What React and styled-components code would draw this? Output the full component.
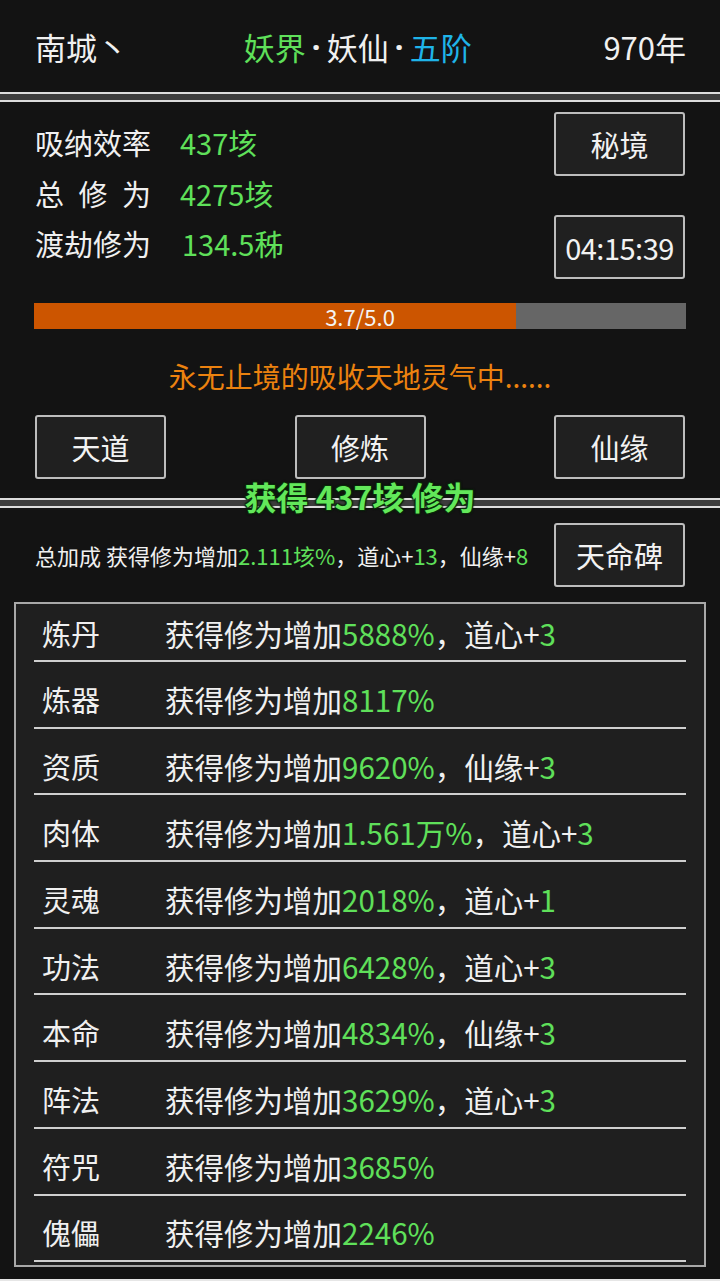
import React from "react";
import styled, { createGlobalStyle } from "styled-components";

const Global = createGlobalStyle`
  html, body { margin: 0; padding: 0; background: #e6e6e6; }
  body { font-family: "Noto Sans CJK SC", "Noto Sans", sans-serif; color: #f0f0f0; }
  * { box-sizing: border-box; }
`;

const Page = styled.div`
  width: 720px;
  background: #131313;
`;

const Header = styled.header`
  height: 92px;
  display: flex;
  align-items: center;
  justify-content: space-between;
  padding: 0 34px 0 35px;
  font-size: 31px;
`;

const Title = styled.div`
  display: flex;
  align-items: center;
  margin-right: 16px;
`;

const Tone = styled.span`
  color: ${(p) => p.$c || "#f0f0f0"};
`;

const Dot = styled.span`
  display: inline-flex;
  justify-content: center;
  width: 21px;
  font-family: "Noto Sans", sans-serif;
  font-weight: 700;
`;

const Separator = styled.div`
  position: relative;
  height: 10px;
  border-top: 2px solid #dcdcdc;
  border-bottom: 2px solid #dcdcdc;
  background: #3c3c3c;
`;

const FloatText = styled.div`
  position: absolute;
  left: 50%;
  top: -24px;
  transform: translateX(-50%);
  white-space: pre;
  font-size: 32px;
  font-weight: 700;
  line-height: 40px;
  color: #62e85a;
  text-shadow: -1px -1px 1px #0b2a0b, 1px -1px 1px #0b2a0b, -1px 1px 1px #0b2a0b,
    1px 1px 1px #0b2a0b, 0 0 3px #000;
  z-index: 2;
`;

const Panel = styled.section`
  padding: ${(p) => p.$pad};
`;

const TopSection = styled.div`
  display: flex;
  justify-content: space-between;
  align-items: flex-start;
`;

const Stats = styled.div`
  padding-top: 5px;
  padding-left: 1px;
  display: flex;
  flex-direction: column;
`;

const StatRow = styled.div`
  height: 50.5px;
  display: flex;
  align-items: center;
  font-size: 29px;
`;

const StatLabel = styled.span`
  width: 116px;
  text-align: justify;
  text-align-last: justify;
  margin-right: ${(p) => (p.$wide ? 31 : 29)}px;
`;

const StatValue = styled.span`
  color: #5fe05a;
`;

const SideButtons = styled.div`
  display: flex;
  flex-direction: column;
  gap: 39px;
  margin-right: 1px;
`;

const Button = styled.div`
  width: 131px;
  height: 64px;
  display: flex;
  align-items: center;
  justify-content: center;
  background: #202020;
  border: 2px solid #bdbdbd;
  border-radius: 3px;
  font-size: ${(p) => p.$size || 29}px;
  color: #f2f2f2;
  letter-spacing: ${(p) => (p.$tight ? "-0.5px" : "0")};
`;

const Progress = styled.div`
  position: relative;
  margin-top: 24px;
  height: 26px;
  background: #666;
  display: flex;
`;

const Fill = styled.div`
  height: 100%;
  background: #cc5500;
`;

const ProgressLabel = styled.div`
  position: absolute;
  inset: 0;
  display: flex;
  align-items: center;
  justify-content: center;
  font-size: 22px;
  color: #f4f4f4;
`;

const Status = styled.div`
  margin-top: 27px;
  height: 40px;
  line-height: 40px;
  text-align: center;
  font-size: 28px;
  color: #ec820f;
`;

const ButtonRow = styled.div`
  margin-top: 19px;
  display: flex;
  justify-content: space-between;
  padding-left: 1px;
  margin-right: 1px;
`;

const SummaryRow = styled.div`
  display: flex;
  align-items: center;
  justify-content: space-between;
  padding: 0 21px 0 21px;
`;

const Summary = styled.div`
  font-size: 22px;
  white-space: nowrap;
`;

const Green = styled.span`
  color: #5fe05a;
`;

const List = styled.div`
  margin-top: 15px;
  border: 2px solid #a8a8a8;
  background: #1f1f1f;
  padding: 0 18px 3px;
`;

const Row = styled.div`
  height: 66.7px;
  padding-top: 9px;
  display: flex;
  align-items: center;
  border-bottom: 2px solid #cfcfcf;
  font-size: 29px;
  &:first-child {
    height: 58px;
    padding-top: 1px;
  }
`;

const RowName = styled.span`
  width: 131px;
  padding-left: 8px;
  flex-shrink: 0;
`;

const RowDesc = styled.span`
  white-space: nowrap;
  font-size: 29.5px;
`;

const rows = [
  ["炼丹", "5888%", "道心", "3"],
  ["炼器", "8117%"],
  ["资质", "9620%", "仙缘", "3"],
  ["肉体", "1.561万%", "道心", "3"],
  ["灵魂", "2018%", "道心", "1"],
  ["功法", "6428%", "道心", "3"],
  ["本命", "4834%", "仙缘", "3"],
  ["阵法", "3629%", "道心", "3"],
  ["符咒", "3685%"],
  ["傀儡", "2246%"],
];

export default function App() {
  const progress = 3.7 / 5.0;
  return (
    <Page>
      <Global />
      <Header>
        <span>南城丶</span>
        <Title>
          <Tone $c="#5fe05a">妖界</Tone>
          <Dot>·</Dot>
          <Tone>妖仙</Tone>
          <Dot>·</Dot>
          <Tone $c="#1fb4e8">五阶</Tone>
        </Title>
        <span>970年</span>
      </Header>
      <Separator />
      <Panel $pad="10px 34px 19px 34px">
        <TopSection>
          <Stats>
            <StatRow>
              <StatLabel>吸纳效率</StatLabel>
              <StatValue>437垓</StatValue>
            </StatRow>
            <StatRow>
              <StatLabel>总修为</StatLabel>
              <StatValue>4275垓</StatValue>
            </StatRow>
            <StatRow>
              <StatLabel $wide>渡劫修为</StatLabel>
              <StatValue>134.5秭</StatValue>
            </StatRow>
          </Stats>
          <SideButtons>
            <Button>秘境</Button>
            <Button $size={29} $tight>04:15:39</Button>
          </SideButtons>
        </TopSection>
        <Progress>
          <Fill style={{ width: `${progress * 100}%` }} />
          <ProgressLabel>3.7/5.0</ProgressLabel>
        </Progress>
        <Status>永无止境的吸收天地灵气中......</Status>
        <ButtonRow>
          <Button>天道</Button>
          <Button>修炼</Button>
          <Button>仙缘</Button>
        </ButtonRow>
      </Panel>
      <Separator>
        <FloatText>获得 437垓 修为</FloatText>
      </Separator>
      <Panel $pad="15px 14px 12px 14px">
        <SummaryRow>
          <Summary>
            总加成 获得修为增加<Green>2.111垓%</Green>，道心+<Green>13</Green>，仙缘+<Green>8</Green>
          </Summary>
          <Button>天命碑</Button>
        </SummaryRow>
        <List>
          {rows.map(([name, pct, extra, n]) => (
            <Row key={name}>
              <RowName>{name}</RowName>
              <RowDesc>
                获得修为增加<Green>{pct}</Green>
                {extra && (
                  <>
                    ，{extra}+<Green>{n}</Green>
                  </>
                )}
              </RowDesc>
            </Row>
          ))}
        </List>
      </Panel>
    </Page>
  );
}
